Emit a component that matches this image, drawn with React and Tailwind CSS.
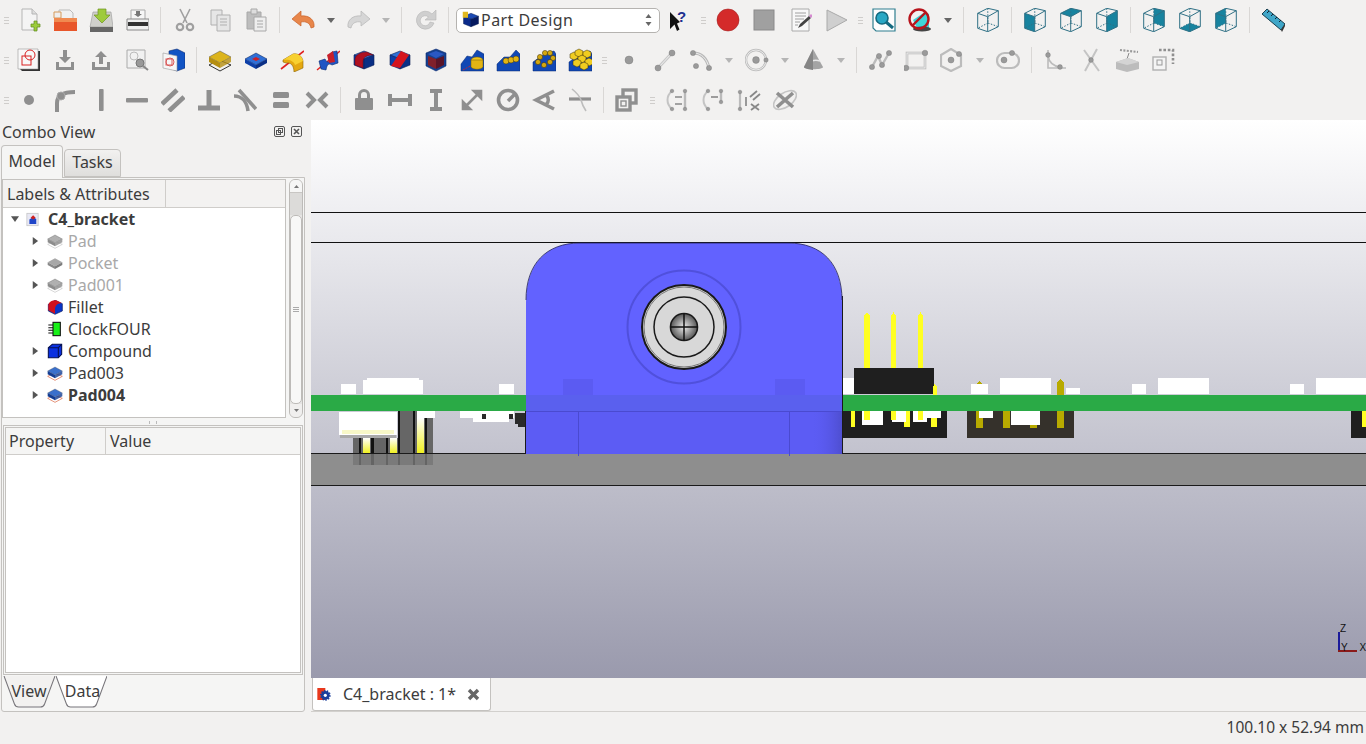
// FreeCAD main window, Part Design workbench
import { useState } from "react";

const G = "#8f8f8f";

// isometric-ish box used by the part design icons
function Box({ t = "#2f6fd6", l = "#0d3fa8", r = "#0a2f85", x = 0, y = 0, s = 1 }) {
  return (
    <g transform={`translate(${x} ${y}) scale(${s})`}>
      <polygon points="12,3 22,7 12,11 2,7" fill={t} stroke="#0a1f55" strokeWidth=".6" />
      <polygon points="2,7 12,11 12,21 2,17" fill={l} stroke="#0a1f55" strokeWidth=".6" />
      <polygon points="22,7 12,11 12,21 22,17" fill={r} stroke="#0a1f55" strokeWidth=".6" />
    </g>
  );
}

function Slab({ t, f, line }) {
  return (
    <g>
      <polygon points="1,17 11,12 23,17 12,23" fill="none" stroke={line} strokeWidth="1" />
      <polygon points="1,9 12,3 23,9 12,15" fill={t} stroke="#555" strokeWidth=".5" />
      <polygon points="1,9 12,15 12,20 1,14" fill={f} />
      <polygon points="23,9 12,15 12,20 23,14" fill={f} opacity=".8" />
    </g>
  );
}

function Ball({ x, y, r = 2.2, c = "#9a9a9a" }) {
  return <circle cx={x} cy={y} r={r} fill={c} stroke="#777" strokeWidth=".4" />;
}

function ViewCube({ face }) {
  const faces = {
    front: "1.7,5.3 11.7,8.7 11.7,23.7 1.7,20.3",
    top: "1.7,5.3 11.7,.3 22.3,2.7 11.7,8.7",
    right: "11.7,8.7 22.3,2.7 22.3,18.7 11.7,23.7",
    rear: "11.7,.3 22.3,2.7 22.3,18.7 12,15",
    bottom: "1.7,20.3 12,15 22.3,18.7 11.7,23.7",
    left: "1.7,5.3 11.7,.3 12,15 1.7,20.3",
  };
  return (
    <g>
      {face && <polygon points={faces[face]} fill="#17839f" />}
      <g fill="none" stroke="#2f7085" strokeWidth="1">
        <polygon points="1.7,5.3 11.7,.3 22.3,2.7 22.3,18.7 11.7,23.7 1.7,20.3" />
        <path d="M1.7 5.3 L11.7 8.7 L22.3 2.7 M11.7 8.7 V23.7" />
        <path d="M11.7 .3 L12 15 M12 15 L22.3 18.7 M12 15 L1.7 20.3" strokeDasharray="1.5 1.5" />
      </g>
    </g>
  );
}

const icons = {
  new: (
    <g>
      <path d="M5 1 H15 L20 6 V22 H5 Z" fill="#f4f4f4" stroke="#b5b5b5" />
      <path d="M15 1 V6 H20" fill="#ddd" stroke="#b5b5b5" />
      <path d="M17 13 H20 V16 H23 V19 H20 V23 H17 V19 H14 V16 H17 Z" fill="#9ccc3c" stroke="#5f8a1c" strokeWidth=".7" />
    </g>
  ),
  open: (
    <g>
      <path d="M6 2 H17 L20 5 V12 H6 Z" fill="#f0f0f0" stroke="#bbb" />
      <path d="M1 4 H8 V10 H1 Z" fill="#eee" stroke="#d69a5a" />
      <path d="M1 10 H24 V23 H1 Z" fill="#e8562a" />
      <path d="M1 10 H24 V14 H1 Z" fill="#f08a50" />
    </g>
  ),
  save: (
    <g>
      <path d="M4 4 H22 L24 19 H1 Z" fill="#cfcfcb" stroke="#999" strokeWidth=".6" />
      <path d="M1 19 H24 V24 H1 Z" fill="#666" />
      <path d="M9 1 H17 V7 H21 L13 15 L5 7 H9 Z" fill="#9ecb3c" stroke="#6d9320" strokeWidth=".7" />
    </g>
  ),
  print: (
    <g>
      <path d="M6 2 H20 V12 H6 Z" fill="#f6f6f6" stroke="#aaa" />
      <path d="M11 3 H15 V6 H17 L13 9 L9 6 H11 Z" fill="#777" />
      <path d="M2 11 H24 V22 H2 Z" fill="#f0f0f0" stroke="#888" />
      <path d="M3 14 H23 V18 H3 Z" fill="#333" />
    </g>
  ),
  cut: (
    <g fill="none" stroke="#a0a0a0" strokeWidth="1.6">
      <path d="M8 1 L15 15 M18 1 L11 15" />
      <circle cx="8" cy="19" r="3.2" strokeWidth="2.2" />
      <circle cx="18" cy="19" r="3.2" strokeWidth="2.2" />
    </g>
  ),
  copy: (
    <g fill="#e6e6e6" stroke="#b0b0b0">
      <path d="M3 2 H14 V17 H3 Z" />
      <path d="M9 7 H22 V23 H9 Z" />
      <path d="M12 11 H19 M12 14 H19 M12 17 H19" fill="none" />
    </g>
  ),
  paste: (
    <g stroke="#a8a8a8">
      <path d="M3 4 H17 V21 H3 Z" fill="#bdbdbd" />
      <path d="M7 1 H13 V6 H7 Z" fill="#ddd" />
      <path d="M10 9 H22 V23 H10 Z" fill="#eee" />
      <path d="M13 13 H19 M13 16 H19 M13 19 H19" fill="none" />
    </g>
  ),
  undo: (
    <path d="M10 3 L1 11 L10 18 V14 C15 13 19 15 20 20 L23 19 C24 12 18 7 10 8 Z" fill="#e8864a" stroke="#c8622a" strokeWidth=".7" />
  ),
  redo: (
    <path d="M15 3 L24 11 L15 18 V14 C10 13 6 15 5 20 L2 19 C1 12 7 7 15 8 Z" fill="#d6d6d6" stroke="#b5b5b5" strokeWidth=".7" />
  ),
  refresh: (
    <path d="M19 6 A9 9 0 1 0 21 15 L17 14 A5 5 0 1 1 15.5 9 L12 12 H23 V2 Z" fill="#cfcfcf" stroke="#b5b5b5" strokeWidth=".6" />
  ),
  what: (
    <g>
      <path d="M4 4 L4 21 L8.5 16.5 L11 23 L13.5 21.5 L11 15.5 L14 14 Z" fill="#111" />
      <text x="11" y="14" fontSize="15" fontWeight="700" fill="#1d2f8f" fontFamily="Liberation Sans, sans-serif">?</text>
    </g>
  ),
  record: <circle cx="12" cy="12" r="11" fill="#d42a2a" stroke="#a52020" strokeWidth=".6" />,
  stop: <rect x="2" y="2" width="20" height="20" fill="#a0a0a0" stroke="#8a8a8a" />,
  macro: (
    <g>
      <path d="M4 1 H21 V23 H4 Z" fill="#f8f8f8" stroke="#aaa" />
      <path d="M7 5 H18 M7 8 H18 M7 11 H16 M7 14 H12 M7 17 H10" stroke="#888" strokeWidth=".8" />
      <path d="M10 20 L12 16 L21 8 L23 10 L14 18 Z" fill="#444" />
      <path d="M21 8 L23 6 L25 8 L23 10 Z" fill="#d68ad0" />
    </g>
  ),
  play: <path d="M3 2 L23 12 L3 23 Z" fill="#cfcfcf" stroke="#aaa" />,
  zoom: (
    <g>
      <path d="M1 1 H23 V23 H4 L1 20 Z" fill="#fdfdfd" stroke="#2f7f8f" strokeWidth="1.2" />
      <circle cx="10" cy="10" r="6" fill="#29a7c4" stroke="#146a80" strokeWidth="1.6" />
      <path d="M14 14 L21 20" stroke="#146a80" strokeWidth="3" />
    </g>
  ),
  nodraw: (
    <g>
      <path d="M5 12 L17 4 L21 6 V20 H9 Z" fill="#3fd5d8" />
      <ellipse cx="14" cy="21" rx="9" ry="2.5" fill="#444" />
      <circle cx="11" cy="11" r="9.5" fill="none" stroke="#b8141c" strokeWidth="2.4" />
      <path d="M4 18 L18 4" stroke="#b8141c" strokeWidth="2.4" />
    </g>
  ),
  iso: <ViewCube />,
  front: <ViewCube face="front" />,
  top: <ViewCube face="top" />,
  right: <ViewCube face="right" />,
  rear: <ViewCube face="rear" />,
  bottom: <ViewCube face="bottom" />,
  left: <ViewCube face="left" />,
  measure: (
    <g>
      <path d="M1 6 L6 1 L24 16 L20 22 Z" fill="#3fa6c8" stroke="#183f4f" strokeWidth="1" />
      <path d="M20 22 L24 16 L24 18 L21 24 Z" fill="#333" />
      <path d="M6 5 L8 3 M10 8 L12 6 M14 11 L16 9 M18 14 L20 12" stroke="#123" strokeWidth="1" />
    </g>
  ),
  sketch: (
    <g>
      <path d="M3 3 H23 V23 H5 L3 21 Z" fill="#333" />
      <path d="M1 1 H21 V21 H1 Z" fill="#f8f8f8" stroke="#999" strokeWidth=".6" />
      <circle cx="13" cy="7" r="5" fill="none" stroke="#d82020" />
      <rect x="5" y="8" width="9" height="9" fill="none" stroke="#d82020" />
    </g>
  ),
  import: (
    <g fill={G}>
      <path d="M3 14 H6 V19 H18 V14 H21 V22 H3 Z" />
      <path d="M10 2 H14 V9 H18 L12 15 L6 9 H10 Z" />
    </g>
  ),
  export: (
    <g fill={G}>
      <path d="M3 14 H6 V19 H18 V14 H21 V22 H3 Z" />
      <path d="M10 16 H14 V9 H18 L12 3 L6 9 H10 Z" />
    </g>
  ),
  preview: (
    <g>
      <path d="M2 2 H20 V20 H2 Z" fill="#f1f1f1" stroke="#aaa" />
      <circle cx="9" cy="8" r="4" fill="none" stroke="#bbb" />
      <circle cx="15" cy="15" r="4" fill="#999" stroke="#777" />
      <path d="M18 18 L23 22" stroke="#888" strokeWidth="2" />
    </g>
  ),
  mapsketch: (
    <g>
      <polygon points="8,3 16,1 24,5 24,20 16,23 8,20" fill="#1254c4" stroke="#0a2a70" strokeWidth=".6" />
      <path d="M2 5 L16 8 V23 L2 20 Z" fill="#f6f6f6" stroke="#999" strokeWidth=".6" />
      <circle cx="9" cy="14" r="4" fill="none" stroke="#d85a5a" />
      <rect x="5" y="11" width="6" height="6" fill="none" stroke="#d85a5a" />
    </g>
  ),
  pad: <Slab t="#dcb41c" f="#b58e10" line="#333" />,
  pocket: (
    <g>
      <polygon points="1,11 12,5 23,11 12,17" fill="#2f6fd6" stroke="#0a1f55" strokeWidth=".5" />
      <polygon points="1,11 12,17 12,21 1,15" fill="#0d3fa8" />
      <polygon points="23,11 12,17 12,21 23,15" fill="#0a2f85" />
      <polygon points="8,11 12,9 16,11 12,13" fill="#c8202a" />
    </g>
  ),
  revolve: (
    <g>
      <path d="M1 21 L24 3" stroke="#e02020" strokeWidth="1.6" />
      <path d="M3 12 L13 6 C18 5 22 8 23 13 V20 L14 24 C14 18 11 14 6 15 L3 14 Z" fill="#e5a810" stroke="#8a6508" strokeWidth=".6" />
      <path d="M3 12 L13 6 C18 5 22 8 23 13 L15 17 C14 13 9 11 3 12 Z" fill="#f8d030" />
    </g>
  ),
  groove: (
    <g>
      <path d="M1 22 L24 3" stroke="#e02020" strokeWidth="1.4" />
      <path d="M3 13 L9 11 C11 15 13 15 16 10 L16 4 L21 3 L22 15 L16 17 C13 15 11 16 10 22 L5 21 Z" fill="#1f55c4" stroke="#0a2a70" strokeWidth=".6" />
      <path d="M11 7 L17 3 L19 14 L13 15 Z" fill="#c8202a" />
    </g>
  ),
  fillet3d: (
    <g>
      <Box />
      <path d="M3 17 V12 C3 7 8 4 15 4 L21 7 C15 7 11 9 11 14 V20 Z" fill="#b01020" stroke="#60081a" strokeWidth=".5" />
    </g>
  ),
  chamfer: (
    <g>
      <Box />
      <polygon points="3,18 13,3 21,7 12,20" fill="#d4141e" />
    </g>
  ),
  thick: (
    <g>
      <polygon points="12,1 22,5 22,18 12,23 2,18 2,5" fill="#15408f" stroke="#0a2a70" strokeWidth=".6" />
      <polygon points="4,8 12,11 12,21 4,17" fill="#80202c" />
      <polygon points="20,8 12,11 12,21 20,17" fill="#5a1428" />
      <polygon points="12,3 20,6 12,10 4,6" fill="#2a58c4" />
    </g>
  ),
  mirror: (
    <g>
      <polygon points="1,16 7,8 12,9 17,2 24,6 24,23 1,23" fill="#1148b5" stroke="#0a2a70" strokeWidth=".5" />
      <path d="M3 22 L12 17" stroke="#e02020" strokeWidth=".8" strokeDasharray="2 1" />
      <ellipse cx="17" cy="12" rx="6" ry="3" fill="#f0c41c" stroke="#6d5808" strokeWidth=".5" />
      <path d="M11 12 V19 C13 22 21 22 23 19 V12 Z" fill="#e2b414" stroke="#6d5808" strokeWidth=".5" />
    </g>
  ),
  linear: (
    <g>
      <polygon points="1,16 8,9 14,9 20,2 24,6 24,23 1,23" fill="#1148b5" stroke="#0a2a70" strokeWidth=".5" />
      <circle cx="10" cy="13" r="3" fill="#e2b414" stroke="#4a3a08" strokeWidth=".5" />
      <circle cx="15" cy="12" r="3" fill="#e2b414" stroke="#4a3a08" strokeWidth=".5" />
      <circle cx="20" cy="11" r="3" fill="#e2b414" stroke="#4a3a08" strokeWidth=".5" />
    </g>
  ),
  polar: (
    <g>
      <polygon points="1,14 8,9 14,5 22,3 24,6 24,23 1,23" fill="#1148b5" stroke="#0a2a70" strokeWidth=".5" />
      {[[8, 9], [13, 5], [18, 5], [21, 10], [18, 14], [12, 17], [6, 14]].map(([x, y]) => (
        <circle key={x * y} cx={x} cy={y} r="2.6" fill="#d4a810" stroke="#3a2e08" strokeWidth=".5" />
      ))}
    </g>
  ),
  multi: (
    <g>
      <polygon points="1,14 8,9 14,5 22,3 24,6 24,23 1,23" fill="#1148b5" stroke="#0a2a70" strokeWidth=".5" />
      {[[6, 8], [11, 5], [19, 6], [14, 11], [21, 14], [9, 15], [16, 18]].map(([x, y]) => (
        <polygon key={x * y} points={`${x},${y - 4} ${x + 4},${y - 2} ${x + 4},${y + 2} ${x},${y + 4} ${x - 4},${y + 2} ${x - 4},${y - 2}`} fill="#f0cc20" stroke="#3a2e08" strokeWidth=".5" />
      ))}
    </g>
  ),
  spoint: <Ball x={12} y={12} r={4} />,
  sline: (
    <g>
      <path d="M5 20 L19 5" stroke="#c8c8c8" strokeWidth="3.2" />
      <path d="M5 20 L19 5" stroke="#f0f0f0" strokeWidth="1" />
      <Ball x={5} y={20} r={3} />
      <Ball x={19} y={5} r={3} />
    </g>
  ),
  sarc: (
    <g>
      <path d="M4 5 C13 5 18 11 20 20" fill="none" stroke="#b8b8b8" strokeWidth="3" />
      <path d="M4 5 C13 5 18 11 20 20" fill="none" stroke="#f0f0f0" strokeWidth="1" />
      <Ball x={4} y={5} r={2.6} />
      <Ball x={20} y={20} r={2.6} />
      <Ball x={7} y={18} r={2.6} />
    </g>
  ),
  scircle: (
    <g>
      <circle cx="11" cy="12" r="10" fill="none" stroke="#bcbcbc" strokeWidth="2.4" />
      <circle cx="11" cy="12" r="10" fill="none" stroke="#f4f4f4" strokeWidth=".8" />
      <Ball x={11} y={12} r={3.4} />
      <Ball x={21} y={12} r={2.2} />
    </g>
  ),
  sconic: (
    <g>
      <path d="M12 1 L22 19 C22 22 3 22 3 19 Z" fill="#a4a4a4" />
      <path d="M5 17 C7 13 14 11 19 13" fill="none" stroke="#e8e8e8" strokeWidth="1.6" />
      <path d="M12 1 L3 19 C3 21 12 22 12 22 Z" fill="#858585" />
    </g>
  ),
  spoly: (
    <g>
      <path d="M4 19 L10 8 L14 17 L21 5" fill="none" stroke="#bcbcbc" strokeWidth="2.4" />
      <Ball x={4} y={19} r={2.6} />
      <Ball x={11} y={8} r={2.6} />
      <Ball x={14} y={17} r={2.6} />
      <Ball x={21} y={5} r={2.6} />
    </g>
  ),
  srect: (
    <g>
      <rect x="3" y="5" width="18" height="15" fill="none" stroke="#bdbdbd" strokeWidth="2.6" />
      <rect x="3" y="5" width="18" height="15" fill="none" stroke="#f4f4f4" strokeWidth=".8" />
      <Ball x={21} y={5} r={2.8} />
      <Ball x={2} y={20} r={2.8} />
    </g>
  ),
  shex: (
    <g>
      <polygon points="11,1 21,7 21,18 11,23 1,18 1,7" fill="none" stroke="#bcbcbc" strokeWidth="2.2" />
      <Ball x={11} y={12} r={3} />
      <Ball x={19} y={6} r={2.6} />
    </g>
  ),
  sslot: (
    <g>
      <rect x="1" y="5" width="22" height="15" rx="7.5" fill="none" stroke="#bcbcbc" strokeWidth="2.2" />
      <Ball x={8} y={12} r={3} />
      <Ball x={16} y={5} r={2.6} />
    </g>
  ),
  sfillet: (
    <g>
      <path d="M5 2 V20 H23 M5 8 C6 14 10 18 17 19" fill="none" stroke="#bcbcbc" strokeWidth="1.6" />
      <Ball x={5} y={7} r={2.4} />
      <Ball x={17} y={19} r={2.4} />
    </g>
  ),
  strim: (
    <g>
      <path d="M5 2 L20 23 M18 1 L6 23" stroke="#c4c4c4" strokeWidth="2" />
      <Ball x={12} y={12} r={2.4} />
    </g>
  ),
  sext: (
    <g>
      <path d="M5 2 L23 4" stroke="#999" strokeWidth="2.2" strokeDasharray="2 1.4" />
      <path d="M14 5 L12 11" stroke="#888" />
      <polygon points="1,14 13,10 24,14 24,21 12,24 1,21" fill="#bcbcbc" />
      <polygon points="1,14 13,10 24,14 12,17" fill="#d4d4d4" />
    </g>
  ),
  scarbon: (
    <g>
      <path d="M8 2 H22 V16" fill="none" stroke="#8f8f8f" strokeWidth="2.6" strokeDasharray="2.6 1.8" />
      <rect x="2" y="9" width="13" height="13" fill="#f4f4f4" stroke="#b0b0b0" strokeWidth="1.4" />
      <rect x="6" y="12" width="5" height="5" fill="none" stroke="#999" />
    </g>
  ),
  cpoint: <circle cx="12" cy="12" r="5" fill={G} />,
  cfillet: (
    <g fill="none" stroke={G} strokeWidth="4">
      <path d="M4 24 V15 C4 8 10 4 22 4" />
      <circle cx="8" cy="8" r="4" fill={G} stroke="#a8a8a8" strokeWidth="1" />
    </g>
  ),
  cv: <rect x="10" y="1" width="4.6" height="22" rx="1" fill={G} />,
  ch: <rect x="1" y="10" width="22" height="4.6" rx="1" fill={G} />,
  cpar: <path d="M1 16 L16 2 M8 23 L23 9" stroke={G} strokeWidth="4.6" />,
  cperp: <path d="M1 20 H23 M12 2 V20" stroke={G} strokeWidth="5" fill="none" />,
  ctan: (
    <g fill="none" stroke={G} strokeWidth="3.6">
      <path d="M6 2 L23 21" />
      <path d="M1 8 C9 8 14 14 15 23" />
    </g>
  ),
  ceq: (
    <g fill={G}>
      <rect x="4" y="4" width="16" height="6" rx="1.5" />
      <rect x="4" y="14" width="16" height="6" rx="1.5" />
    </g>
  ),
  csym: <path d="M2 5 L9 12 L2 19 M22 5 L15 12 L22 19" fill="none" stroke={G} strokeWidth="4" />,
  clock: (
    <g fill={G}>
      <path d="M6 10 V7 A6 6 0 0 1 18 7 V10 H15 V7 A3 3 0 0 0 9 7 V10 Z" />
      <rect x="3" y="10" width="18" height="12" rx="1" />
    </g>
  ),
  chd: <path d="M2 6 V18 M22 6 V18 M2 12 H22" stroke={G} strokeWidth="4" fill="none" />,
  cvd: <path d="M6 3 H18 M6 21 H18 M12 3 V21" stroke={G} strokeWidth="4" fill="none" />,
  cdist: <path d="M6 18 L18 6 M3 14 V21 H10 Z M21 10 V3 H14 Z" stroke={G} strokeWidth="2.6" fill={G} />,
  cradius: (
    <g fill="none" stroke={G} strokeWidth="3.6">
      <circle cx="12" cy="12" r="9.5" />
      <path d="M12 13 L19 6" />
    </g>
  ),
  cangle: <path d="M22 3 L4 12 L22 21 M14 7 C17 10 17 14 14 17" fill="none" stroke={G} strokeWidth="3.6" />,
  csnell: (
    <g fill="none">
      <path d="M1 11 H23" stroke={G} strokeWidth="3.2" />
      <path d="M4 1 C9 5 12 9 13 12 C14 16 16 20 18 23" stroke="#bdbdbd" strokeWidth="1.6" />
    </g>
  ),
  ctoggle: (
    <g fill="none" stroke={G} strokeWidth="3.4">
      <rect x="8" y="2" width="13" height="13" />
      <rect x="2" y="9" width="13" height="13" fill="#f2f1f0" />
      <rect x="6" y="13" width="5" height="5" strokeWidth="1.4" />
    </g>
  ),
  s1: (
    <g>
      <path d="M7 3 C1 8 1 16 7 21" fill="none" stroke="#c4c4c4" strokeWidth="2" />
      <path d="M20 4 V20" stroke="#bbb" strokeWidth="2.4" />
      <path d="M17 9 H10 M17 16 H10" stroke="#888" strokeWidth="1.6" />
      <Ball x={7} y={3} r={1.8} /><Ball x={20} y={3} r={1.8} /><Ball x={7} y={21} r={1.8} /><Ball x={20} y={21} r={1.8} />
    </g>
  ),
  s2: (
    <g>
      <path d="M7 3 C1 8 1 16 7 21" fill="none" stroke="#c4c4c4" strokeWidth="2" />
      <path d="M20 4 V14" stroke="#bbb" strokeWidth="2.4" />
      <path d="M17 9 H10" stroke="#888" strokeWidth="1.6" />
      <Ball x={7} y={3} r={1.8} /><Ball x={20} y={3} r={1.8} /><Ball x={7} y={21} r={1.8} /><Ball x={20} y={14} r={1.8} />
    </g>
  ),
  s3: (
    <g>
      <path d="M3 4 V21" stroke="#bbb" strokeWidth="2.2" />
      <Ball x={3} y={4} r={1.8} /><Ball x={3} y={21} r={1.8} />
      <path d="M9 9 V18" stroke="#999" strokeWidth="2" />
      <path d="M13 9 L20 3 M16 12 L23 6 M14 16 L22 22 M22 16 L14 22" stroke="#888" strokeWidth="1.8" />
    </g>
  ),
  s4: (
    <g>
      <ellipse cx="12" cy="12" rx="13" ry="7" transform="rotate(-35 12 12)" fill="none" stroke="#c4c4c4" strokeWidth="1.6" />
      <path d="M4 5 L20 19 M20 5 L4 19" stroke={G} strokeWidth="3.6" />
    </g>
  ),
};

const row1 = ["grip", "new", "open", "save", "print", "sep", "cut", "copy", "paste", "sep", "undo", "dropA", "redo", "dropB", "sep", "refresh", "sep", "combo", "what", "grip14", "record", "stop", "macro", "play", "grip12", "zoom", "nodraw", "dropA", "sep13", "iso", "sep", "front", "top", "right", "sep", "rear", "bottom", "left", "sep", "measure"];
const row2 = ["grip", "sketch", "import", "export", "preview", "mapsketch", "sep", "pad", "pocket", "revolve", "groove", "fillet3d", "chamfer", "thick", "mirror", "linear", "polar", "multi", "grip13", "spoint", "sline", "sarc", "drop", "scircle", "drop", "sconic", "drop", "sep", "spoly", "srect", "shex", "drop", "sslot", "sep", "sfillet", "strim", "sext", "scarbon"];
const row3 = ["grip", "cpoint", "cfillet", "cv", "ch", "cpar", "cperp", "ctan", "ceq", "csym", "sep", "clock", "chd", "cvd", "cdist", "cradius", "cangle", "csnell", "sep", "ctoggle", "grip14", "s1", "s2", "s3", "s4"];

function Grip({ className }) {
  return (
    <div className={`flex flex-col gap-[2px] items-center justify-center ${className}`}>
      <span className="w-[5px] h-px bg-[#cfcdcb]" />
      <span className="w-[5px] h-px bg-[#cfcdcb]" />
      <span className="w-[5px] h-px bg-[#cfcdcb]" />
    </div>
  );
}

function Sep({ className }) {
  return (
    <div className={`flex justify-center ${className}`}>
      <span className="w-px h-[26px] bg-[#d9d7d5]" />
    </div>
  );
}

function Drop({ className, dark }) {
  return (
    <div className={`flex justify-center ${className}`}>
      <svg width="8" height="5" viewBox="0 0 8 5">
        <path d="M0 0 H8 L4 5 Z" fill={dark ? "#666" : "#b5b5b5"} />
      </svg>
    </div>
  );
}

function Combo() {
  return (
    <div className="w-[204px] ml-[2px] h-[25px] flex items-center bg-white border border-[#b5b3b0] rounded-[5px] pl-[5px] pr-[7px] text-[#3c3c3c]">
      <svg width="18" height="18" viewBox="0 0 24 24">
        <Box t="#1b49b4" l="#0a2a8a" r="#061a60" />
        <polygon points="1,1 8,1 8,9 1,9" fill="#e0b820" />
      </svg>
      <span className="ml-px flex-1 text-[16px] tracking-[.45px]">Part Design</span>
      <svg width="7" height="14" viewBox="0 0 7 14" fill="#666">
        <path d="M3.5 1 L6.5 5 H.5 Z M3.5 13 L.5 9 H6.5 Z" />
      </svg>
    </div>
  );
}

function ToolRow({ items }) {
  return (
    <div className="h-10 flex items-center">
      {items.map((it, i) => {
        if (it === "grip") return <Grip key={i} className="w-[11px] pl-px" />;
        if (it === "grip12") return <Grip key={i} className="w-3" />;
        if (it === "grip13") return <Grip key={i} className="w-[13px]" />;
        if (it === "grip14") return <Grip key={i} className="w-[14px]" />;
        if (it === "sep") return <Sep key={i} className="w-[11px]" />;
        if (it === "sep13") return <Sep key={i} className="w-[13px]" />;
        if (it === "dropA") return <Drop key={i} className="w-[19px]" dark={i < 13 || i > 20} />;
        if (it === "dropB") return <Drop key={i} className="w-5" />;
        if (it === "drop") return <Drop key={i} className="w-5" />;
        if (it === "combo") return <Combo key={i} />;
        return (
          <div key={i} className="w-9 flex justify-center">
            <svg width="24" height="24" viewBox="0 0 24 24">{icons[it]}</svg>
          </div>
        );
      })}
    </div>
  );
}

const treeRows = [
  { name: "Pad", icon: "pad", grey: true, arrow: true },
  { name: "Pocket", icon: "pocket", grey: true, arrow: true },
  { name: "Pad001", icon: "pad", grey: true, arrow: true },
  { name: "Fillet", icon: "fillet" },
  { name: "ClockFOUR", icon: "clock" },
  { name: "Compound", icon: "compound", arrow: true },
  { name: "Pad003", icon: "pad3", arrow: true },
  { name: "Pad004", icon: "pad3", arrow: true, bold: true },
];

function TreeIcon({ kind }) {
  if (kind === "fillet")
    return (
      <svg width="16" height="16" viewBox="0 0 24 24">
        <polygon points="12,2 23,7 23,18 12,23 2,18 2,8" fill="#0a35c8" stroke="#061a60" />
        <path d="M2 17 V9 C3 4 8 2 14 2 L22 6 C15 7 12 10 12 16 V22 Z" fill="#d0101e" />
      </svg>
    );
  if (kind === "clock")
    return (
      <svg width="16" height="16" viewBox="0 0 24 24">
        <rect x="9" y="2" width="11" height="20" fill="#18f018" stroke="#111" strokeWidth="1.6" />
        <path d="M2 6 H9 M2 10 H9 M2 14 H9 M2 18 H9" stroke="#111" strokeWidth="1.6" />
      </svg>
    );
  if (kind === "compound")
    return (
      <svg width="16" height="16" viewBox="0 0 24 24">
        <polygon points="8,2 22,2 22,17 17,22 2,22 2,7" fill="#0a30e0" stroke="#050f50" strokeWidth="1.6" />
        <path d="M2 7 H17 V22 M17 7 L22 2" fill="none" stroke="#050f50" strokeWidth="1.6" />
      </svg>
    );
  if (kind === "pocket")
    return (
      <svg width="16" height="16" viewBox="0 0 24 24">
        <polygon points="1,11 12,5 23,11 12,17" fill="#a8a8a8" />
        <polygon points="1,11 12,17 12,21 1,15" fill="#8a8a8a" />
        <polygon points="23,11 12,17 12,21 23,15" fill="#7c7c7c" />
      </svg>
    );
  if (kind === "pad3")
    return (
      <svg width="16" height="16" viewBox="0 0 24 24">
        <Slab t="#3a70cc" f="#123c92" line="#d8603c" />
      </svg>
    );
  return (
    <svg width="16" height="16" viewBox="0 0 24 24">
      <Slab t="#b0b0b0" f="#8c8c8c" line="#c4c4c4" />
    </svg>
  );
}

function Arrow({ open }) {
  return (
    <svg width="8" height="8" viewBox="0 0 9 9" className="shrink-0">
      {open ? <path d="M0 1.5 H9 L4.5 8 Z" fill="#555" /> : <path d="M2 0 L8 4.5 L2 9 Z" fill="#555" />}
    </svg>
  );
}

function Tree() {
  return (
    <div className="flex-1 border border-[#c4c2bf] bg-white flex flex-col min-w-0">
      <div className="h-[28px] flex bg-[#f3f2f1] border-b border-[#cfcdca]">
        <div className="w-[163px] border-r border-[#cfcdca] pl-1 flex items-center text-[16px]">Labels &amp; Attributes</div>
      </div>
      <div className="flex items-center h-[22px] pl-[8px]">
        <Arrow open />
        <svg width="15" height="15" viewBox="0 0 24 24" className="ml-[6px]">
          <rect x="3" y="2" width="18" height="20" fill="#e8e8f4" stroke="#bbb" />
          <polygon points="7,12 13,8 18,11 18,19 7,19" fill="#1f45c8" />
          <polygon points="9,9 13,5 17,9 13,12" fill="#d02020" />
        </svg>
        <span className="ml-[8px] font-bold text-[16px]">C4_bracket</span>
      </div>
      {treeRows.map((r) => (
        <div key={r.name} className="flex items-center h-[22px] pl-[28px]">
          <div className="w-[9px] flex">{r.arrow && <Arrow />}</div>
          <div className="ml-[7px] w-[16px] flex"><TreeIcon kind={r.icon} /></div>
          <span className={`ml-[5px] text-[16px] ${r.grey ? "text-[#a8a8a8]" : ""} ${r.bold ? "font-bold" : ""}`}>{r.name}</span>
        </div>
      ))}
    </div>
  );
}

function ScrollBar() {
  return (
    <div className="w-[14px] ml-[3px] h-[239px] border border-[#bdbbb8] rounded-[6px] bg-[#e6e5e3] flex flex-col overflow-hidden">
      <div className="h-[12px] flex items-center justify-center bg-[#f6f6f5]">
        <svg width="5" height="3" viewBox="0 0 5 3"><path d="M2.5 0 L5 3 H0 Z" fill="#777" /></svg>
      </div>
      <div className="h-[23px] bg-[#dcdbd9] border-t border-[#c8c6c3]" />
      <div className="flex-1 bg-[#f8f8f7] border border-[#bdbbb8] rounded-[5px] flex flex-col items-center justify-center gap-px">
        <span className="w-[6px] h-px bg-[#aaa]" />
        <span className="w-[6px] h-px bg-[#aaa]" />
        <span className="w-[6px] h-px bg-[#aaa]" />
      </div>
      <div className="h-[13px] flex items-center justify-center bg-[#f0efee]">
        <svg width="5" height="3" viewBox="0 0 5 3"><path d="M2.5 3 L5 0 H0 Z" fill="#777" /></svg>
      </div>
    </div>
  );
}

function BottomTab({ label, active, className }) {
  return (
    <div className={`relative h-[32px] flex items-center justify-center text-[16px] ${className}`}>
      <svg className="absolute inset-0 w-full h-full" viewBox="0 0 50 32" preserveAspectRatio="none">
        <path d="M1 0 L11 28 Q12 31 15 31 H36 Q39 31 40 28 L50 0" fill={active ? "#fff" : "#f2f1f0"} stroke="#77757a" strokeWidth="1" />
      </svg>
      <span className="relative pb-[2px]">{label}</span>
    </div>
  );
}

function Pin({ x, y1, y2, c = "#ffff22", w = 6, tip }) {
  return (
    <g>
      <rect x={x} y={y1} width={w} height={y2 - y1} fill={c} />
      {tip && <polygon points={`${x + 1},${y1} ${x + w / 2},${y1 - 3} ${x + w - 1},${y1}`} fill={c} />}
    </g>
  );
}

function Rects({ items, fill = "#fff" }) {
  return items.map(([x, y, x2, y2]) => <rect key={`${x}-${y}`} x={x} y={y} width={x2 - x} height={y2 - y} fill={fill} />);
}

// the 3D scene of the part, drawn in screen coordinates
function Scene() {
  return (
    <svg viewBox="311 120 1055 558" width="1055" height="558" className="block" shapeRendering="crispEdges">
      <defs>
        <linearGradient id="sky" x1="0" y1="0" x2="0" y2="1">
          <stop offset="0" stopColor="#ffffff" />
          <stop offset="1" stopColor="#9a9aad" />
        </linearGradient>
        <linearGradient id="pinfade" x1="0" y1="0" x2="0" y2="1">
          <stop offset="0" stopColor="#ffffff" />
          <stop offset="1" stopColor="#f0f020" />
        </linearGradient>
        <linearGradient id="edge" x1="0" y1="0" x2="1" y2="0">
          <stop offset="0" stopColor="#5a5af0" stopOpacity="0" />
          <stop offset="1" stopColor="#4848c0" stopOpacity=".7" />
        </linearGradient>
        <radialGradient id="hole">
          <stop offset="0" stopColor="#eeeeee" />
          <stop offset="1" stopColor="#555555" />
        </radialGradient>
      </defs>
      <rect x="311" y="120" width="1055" height="558" fill="url(#sky)" />
      <path d="M311 212.5 H1366 M311 242.5 H1366" stroke="#111" />

      <rect x="311" y="454" width="1055" height="31" fill="#8e8e8e" />
      <path d="M311 453.5 H1366 M311 485.5 H1366" stroke="#1a1a1a" />

      {/* left connector */}
      <rect x="353" y="438" width="80" height="15" fill="#666" />
      <rect x="398" y="411" width="35" height="42" fill="#666" />
      <rect x="353" y="454" width="80" height="11" fill="#7a7a7a" />
      <Rects items={[[359, 438, 361, 453], [371, 438, 374, 453], [386, 438, 388, 453], [398, 411, 400, 453], [413, 411, 415, 453], [425, 418, 427, 453]]} fill="#111" />
      <Rects items={[[359, 454, 361, 465], [371, 454, 374, 465], [386, 454, 388, 465], [398, 454, 400, 465], [413, 454, 415, 465], [425, 454, 427, 465]]} fill="#646464" />
      <rect x="363" y="438" width="7" height="15" fill="url(#pinfade)" />
      <rect x="390" y="438" width="7" height="15" fill="url(#pinfade)" />
      <rect x="417" y="418" width="7" height="35" fill="url(#pinfade)" />
      <Rects items={[[339, 412, 397, 435], [417, 411, 435, 418]]} />
      <rect x="342" y="430" width="52" height="4" fill="#f8f8c8" />
      <rect x="340" y="435" width="56" height="3" fill="#aaa" />

      {/* white parts above the board */}
      <Rects items={[[341, 384, 356, 394], [363, 380, 423, 394], [367, 378, 419, 380], [499, 384, 514, 394], [460, 411, 514, 418], [473, 418, 509, 422], [843, 378, 854, 394], [971, 384, 988, 394], [1000, 378, 1051, 394], [1066, 388, 1080, 394], [1132, 384, 1146, 394], [1158, 378, 1209, 394], [1290, 384, 1304, 394], [1316, 378, 1366, 394]]} />
      <Rects items={[[482, 414, 486, 419], [509, 414, 513, 419], [515, 413, 525, 424], [518, 424, 525, 427]]} fill="#2a2a2a" />

      {/* right headers */}
      <Pin x={864} y1={315} y2={368} tip />
      <Pin x={891} y1={315} y2={368} w={5} tip />
      <Pin x={918} y1={315} y2={368} w={5} tip />
      <rect x="854" y="368" width="80" height="26" fill="#1f1f1f" />
      <Pin x={933} y1={386} y2={395} w={4} tip />
      <rect x="843" y="411" width="104" height="27" fill="#1f1f1f" />
      <Pin x={851} y1={411} y2={427} w={4} />
      <Pin x={904} y1={411} y2={427} />
      <Pin x={931} y1={418} y2={427} />
      <Rects items={[[862, 411, 883, 425], [892, 411, 906, 422], [913, 411, 927, 422], [927, 411, 941, 418]]} />
      <Pin x={864} y1={411} y2={420} />
      <Pin x={891} y1={411} y2={420} w={5} />
      <Pin x={918} y1={411} y2={420} w={5} />

      <rect x="967" y="411" width="107" height="27" fill="#35312b" />
      {[976, 1003, 1030, 1057].map((x) => (
        <Pin key={x} x={x} y1={411} y2={428} w={7} c="#b8aa00" />
      ))}
      <Pin x={976} y1={384} y2={384} w={7} c="#b8aa00" tip />
      <Pin x={1057} y1={382} y2={395} w={7} c="#b8aa00" tip />
      <Rects items={[[979, 411, 993, 418], [1011, 411, 1040, 425]]} />
      <rect x="1351" y="411" width="15" height="27" fill="#1f1f1f" />
      <Pin x={1362} y1={411} y2={427} w={4} />

      {/* board */}
      <rect x="311" y="395" width="1055" height="16" fill="#2aaa46" />

      {/* bracket, see-through */}
      <g shapeRendering="auto">
        <path d="M526 454 V302 C526 264 546 243 580 243 H788 C822 243 842 264 842 302 V454 Z" fill="#6262ff" />
        <path d="M842.5 296 V454 M525.5 411 V454" stroke="#1a1a1a" fill="none" />
        <path d="M526 300 C526 264 546 243 580 243 H788 C822 243 842 264 842 300" stroke="#23235a" strokeWidth=".8" fill="none" />
      </g>
      <rect x="526" y="395" width="316" height="16" fill="#5a60ee" />
      <Rects items={[[563, 379, 593, 395], [775, 379, 805, 395]]} fill="#5b5bf2" />
      <rect x="526" y="411" width="316" height="43" fill="#5c5cf4" />
      <rect x="812" y="411" width="30" height="43" fill="url(#edge)" />
      <path d="M526 411.5 H842 M578.5 411 V456 M789.5 411 V456" stroke="#4a4ad0" />

      {/* screw */}
      <g shapeRendering="auto" fill="none">
        <circle cx="684" cy="327" r="56.5" stroke="#5050dc" strokeWidth="2" />
        <circle cx="684" cy="327" r="42" fill="#d8d8d8" stroke="#1a1a1a" strokeWidth="2" />
        <circle cx="684" cy="327" r="40" stroke="#777" strokeWidth="1" />
        <circle cx="684" cy="327" r="30" stroke="#1a1a1a" strokeWidth="1.5" />
        <circle cx="684" cy="327" r="13.5" fill="url(#hole)" stroke="#1a1a1a" strokeWidth="1.6" />
        <path d="M670.5 327 H697.5 M684 313.5 V340.5" stroke="#111" strokeWidth="1.5" />
      </g>

      {/* axis cross */}
      <path d="M1338.5 632 V650" stroke="#1a1a9a" strokeWidth="2" />
      <path d="M1338 650.5 H1357" stroke="#8a1a1a" strokeWidth="2" />
      <g fontSize="10" fill="#111" fontFamily="Liberation Sans, sans-serif" shapeRendering="auto">
        <text x="1340" y="632">Z</text>
        <text x="1341" y="651">Y</text>
        <text x="1359.5" y="651">X</text>
      </g>
    </svg>
  );
}

export default function App() {
  const [tab] = useState("Model");
  return (
    <div className="w-[1366px] h-[744px] overflow-hidden flex flex-col bg-[#f2f1f0] text-[#3c3c3c] font-['Noto_Sans',sans-serif]">
      <ToolRow items={row1} />
      <ToolRow items={row2} />
      <ToolRow items={row3} />

      <div className="flex h-[592px]">
        {/* combo view */}
        <div className="w-[311px] flex flex-col pl-px pr-[6px]">
          <div className="h-[25px] flex items-center pl-px pr-[3px] pb-[2px]">
            <span className="flex-1 text-[16px]">Combo View</span>
            <svg width="11" height="11" viewBox="0 0 11 11" fill="none" stroke="#555" className="mr-[6px]">
              <rect x=".5" y=".5" width="10" height="10" rx="1.5" />
              <rect x="4.5" y="2.5" width="4" height="4" />
              <rect x="2.5" y="4.5" width="4" height="4" />
            </svg>
            <svg width="11" height="11" viewBox="0 0 11 11" fill="none" stroke="#555">
              <rect x=".5" y=".5" width="10" height="10" rx="1.5" />
              <path d="M3 3 L8 8 M8 3 L3 8" strokeWidth="1.6" />
            </svg>
          </div>
          <div className="h-[32px] flex items-end text-[16px]">
            <div className={`w-[62px] h-[33px] -mb-px z-10 flex items-center justify-center border border-b-0 border-[#c4c2bf] rounded-t-[4px] pb-[2px] ${tab === "Model" ? "bg-[#f5f5f4]" : ""}`}>Model</div>
            <div className="w-[57px] h-[28px] ml-px flex items-center justify-center border border-[#c4c2bf] rounded-t-[4px] pb-[2px] bg-gradient-to-b from-[#f2f1f0] to-[#dfdedc]">Tasks</div>
          </div>
          <div className="flex-1 border border-[#c4c2bf] rounded-b-[3px] bg-[#f5f5f4] flex flex-col">
            <div className="flex pt-px pr-px h-[241px] items-start">
              <div className="w-[285px] h-[239px] flex">
                <Tree />
              </div>
              <ScrollBar />
            </div>
            <div className="h-[6px] flex justify-center items-center">
              <span className="w-[8px] h-[3px] border-x border-[#bbb]" />
            </div>
            <div className="mx-px h-[250px] border border-[#c4c2bf] p-px">
              <div className="h-full bg-white border border-[#c4c2bf] flex flex-col">
                <div className="h-[27px] flex bg-[#f5f5f4] border-b border-[#cfcdca] text-[16px]">
                  <div className="w-[100px] pl-[3px] border-r border-[#cfcdca] flex items-center">Property</div>
                  <div className="pl-[4px] flex items-center">Value</div>
                </div>
              </div>
            </div>
            <div className="flex pl-[1px] pt-px">
              <BottomTab label="View" className="w-[52px]" />
              <BottomTab label="Data" active className="w-[52px] pl-[3px]" />
            </div>
          </div>
        </div>

        {/* 3D view + document tabs */}
        <div className="flex-1 flex flex-col">
          <Scene />
          <div className="h-[34px] border-b border-[#d2d0cd] flex pl-px">
            <div className="w-[179px] h-[33px] bg-white border-x border-b border-[#c4c2bf] rounded-b-[3px] flex items-center pl-[3px]">
              <svg width="16" height="16" viewBox="0 0 24 24">
                <path d="M2 3 H14 V21 H2 Z" fill="#e8381c" />
                <circle cx="14" cy="14" r="6.5" fill="#1c3f9c" stroke="#1c3f9c" strokeWidth="3" strokeDasharray="2 2" />
                <circle cx="14" cy="14" r="2.4" fill="#fff" />
              </svg>
              <span className="ml-[11px] text-[16px]">C4_bracket : 1*</span>
              <svg width="13" height="13" viewBox="0 0 13 13" className="ml-[11px]">
                <path d="M2 2 L11 11 M11 2 L2 11" stroke="#666" strokeWidth="3.4" />
              </svg>
            </div>
          </div>
        </div>
      </div>

      <div className="h-8 flex items-center justify-end pr-[2px] pb-px text-[15.5px]">100.10 x 52.94 mm</div>
    </div>
  );
}
